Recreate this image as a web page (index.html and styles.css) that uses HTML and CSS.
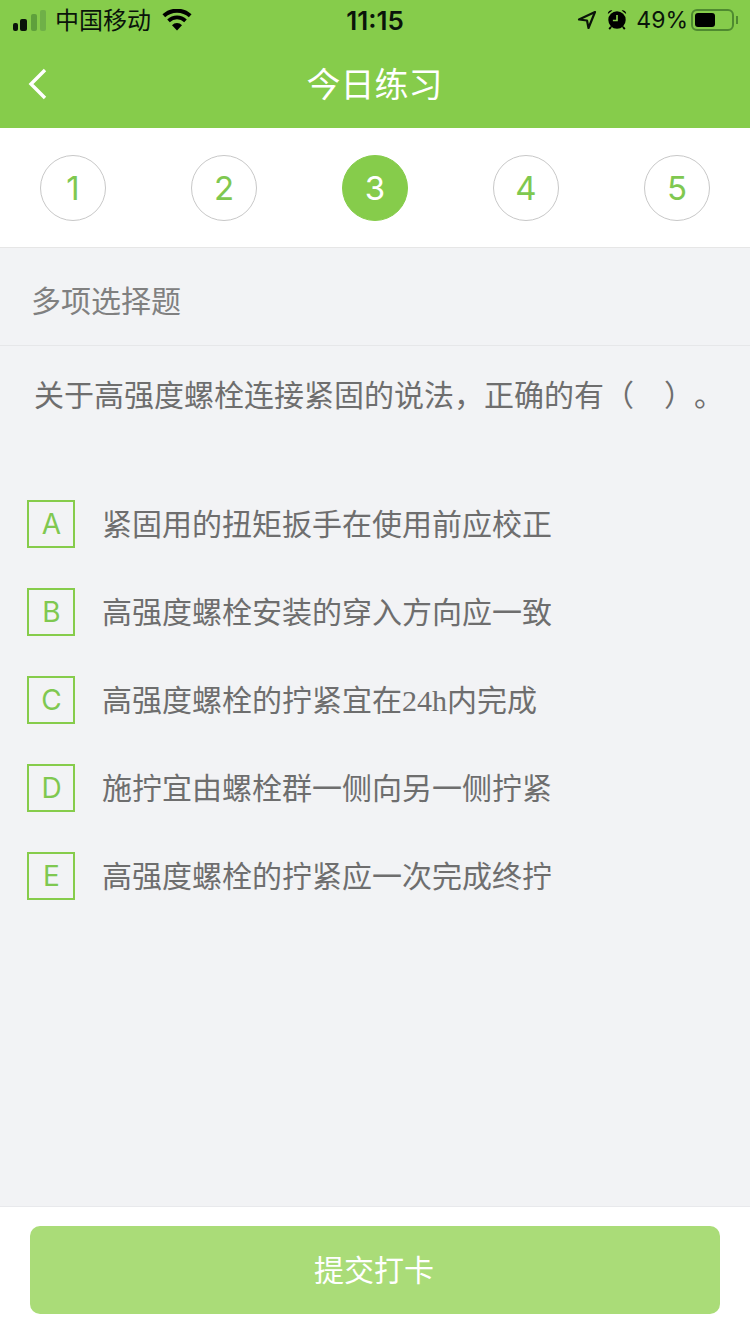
FILE: index.html
```html
<!DOCTYPE html>
<html lang="zh-CN">
<head>
    <meta charset="UTF-8">
    <meta name="viewport" content="width=device-width, initial-scale=1.0">
    <title>今日练习</title>
    <link rel="stylesheet" href="styles.css">
</head>
<body>
    <div class="page">
        <div class="top">
            <div class="status">
                <div class="status-left">
                    <svg class="signal" width="36" height="24" viewBox="0 0 36 24">
                        <rect x="1" y="15" width="5" height="8" rx="2" fill="#0a140a"/>
                        <rect x="8" y="11" width="7" height="12" rx="2" fill="#0a140a"/>
                        <rect x="19" y="6" width="6" height="17" rx="2" fill="#5fa03c"/>
                        <rect x="28" y="2" width="6" height="21" rx="2" fill="#6fb048"/>
                    </svg>
                    <span class="carrier">中国移动</span>
                    <svg class="wifi" width="30" height="22" viewBox="0 0 30 22">
                        <path d="M15 21.500l-5-5.300a7 7 0 0 1 10 0z" fill="#000"/>
                        <path d="M6.500 11.800a12.500 12.500 0 0 1 17 0" fill="none" stroke="#000" stroke-width="3.800"/>
                        <path d="M1.800 6.800a19.500 19.500 0 0 1 26.400 0" fill="none" stroke="#000" stroke-width="4"/>
                    </svg>
                </div>
                <span class="time">11:15</span>
                <div class="status-right">
                    <svg width="20" height="20" viewBox="0 0 20 20">
                        <path d="M18 2L2 9.500l8 1 1.500 7.500z" fill="none" stroke="#0a140a" stroke-width="2.200" stroke-linejoin="round"/>
                    </svg>
                    <svg class="alarm" width="22" height="24" viewBox="0 0 24 26">
                        <path d="M2 6.500a4 4 0 0 1 5-4zM22 6.500a4 4 0 0 0-5-4z" fill="#000"/>
                        <path d="M5.500 20.500l-2 2.500M18.500 20.500l2 2.500" stroke="#000" stroke-width="2"/>
                        <circle cx="12" cy="13" r="9.500" fill="#000"/>
                        <path d="M12 7.500V13.500H7.500" fill="none" stroke="#86cd4b" stroke-width="1.800"/>
                    </svg>
                    <span class="percent">49%</span>
                    <div class="battery"><div class="battery-level"></div></div>
                    <div class="battery-cap"></div>
                </div>
            </div>
            <div class="nav">
                <svg class="back" width="20" height="32" viewBox="0 0 20 32">
                    <path d="M17 2L3 16l14 14" fill="none" stroke="#fff" stroke-width="3.400"/>
                </svg>
                <h1>今日练习</h1>
            </div>
        </div>

        <div class="steps">
            <div class="step">1</div>
            <div class="step">2</div>
            <div class="step active">3</div>
            <div class="step">4</div>
            <div class="step">5</div>
        </div>

        <div class="main">
            <div class="type">多项选择题</div>
            <p class="question">关于高强度螺栓连接紧固的说法，正确的有（<span class="blank"></span>）。</p>
            <div class="options">
                <div class="option"><span class="letter">A</span><span class="option-text">紧固用的扭矩扳手在使用前应校正</span></div>
                <div class="option"><span class="letter">B</span><span class="option-text">高强度螺栓安装的穿入方向应一致</span></div>
                <div class="option"><span class="letter">C</span><span class="option-text">高强度螺栓的拧紧宜在<span class="num">24h</span>内完成</span></div>
                <div class="option"><span class="letter">D</span><span class="option-text">施拧宜由螺栓群一侧向另一侧拧紧</span></div>
                <div class="option"><span class="letter">E</span><span class="option-text">高强度螺栓的拧紧应一次完成终拧</span></div>
            </div>
        </div>

        <div class="footer">
            <button>提交打卡</button>
        </div>
    </div>
</body>
</html>
```

FILE: styles.css
```css
* {
    box-sizing: border-box;
}
body {
    margin: 0;
    font-family: "Liberation Sans", "Noto Sans CJK SC", sans-serif;
    background-color: #f2f3f5;
}
.page {
    display: flex;
    flex-direction: column;
    width: 750px;
    height: 1334px;
    overflow: hidden;
}
.top {
    height: 128px;
    background-color: #86cc4b;
}
.status {
    display: flex;
    justify-content: space-between;
    align-items: center;
    height: 40px;
    padding: 0 12px;
    color: #0a140a;
}
.status-left,
.status-right {
    display: flex;
    align-items: center;
    width: 270px;
}
.status-right {
    justify-content: flex-end;
}
.carrier {
    margin-left: 7px;
    padding-bottom: 3px;
    font-size: 24px;
}
.wifi {
    margin-left: 11px;
}
.time {
    font-family: Inter, sans-serif;
    font-size: 26px;
    font-weight: 600;
}
.alarm {
    margin-left: 9px;
}
.percent {
    margin-left: 8px;
    font-family: Inter, sans-serif;
    font-size: 23px;
}
.battery {
    width: 43px;
    height: 22px;
    margin-left: 3px;
    padding: 2px;
    border: 2px solid #4f8a30;
    border-radius: 6px;
}
.battery-level {
    width: 20px;
    height: 100%;
    background-color: #000;
    border-radius: 3px;
}
.battery-cap {
    width: 2px;
    height: 8px;
    margin-left: 2px;
    background-color: #4f8a30;
}
.nav {
    display: flex;
    justify-content: center;
    align-items: center;
    position: relative;
    height: 88px;
}
.nav h1 {
    margin: 0 0 4px -1px;
    font-size: 34px;
    font-weight: 400;
    color: #fff;
}
.back {
    position: absolute;
    left: 28px;
    top: 28px;
}
.steps {
    display: flex;
    justify-content: space-between;
    align-items: center;
    height: 120px;
    padding: 0 40px;
    background-color: #fff;
    border-bottom: 1px solid #e6e6e6;
}
.step {
    display: flex;
    justify-content: center;
    align-items: center;
    width: 66px;
    height: 66px;
    font-family: Inter, "Liberation Sans", sans-serif;
    font-size: 33px;
    font-weight: 400;
    color: #7fc850;
    border: 1px solid #c8c8c8;
    border-radius: 50%;
}
.step.active {
    color: #fff;
    background-color: #86cc4b;
    border-color: #86cc4b;
}
.main {
    flex: 1;
}
.type {
    display: flex;
    align-items: center;
    height: 98px;
    padding: 4px 0 0 31px;
    font-size: 30px;
    color: #808080;
    border-bottom: 1px solid #e6e7e9;
}
.question {
    margin: 0;
    padding: 32px 0 0 34px;
    font-size: 30px;
    line-height: 36px;
    color: #6e6e6e;
    text-spacing-trim: space-all;
}
.blank {
    display: inline-block;
    width: 30px;
}
.options {
    display: flex;
    flex-direction: column;
    gap: 40px;
    padding: 86px 0 0 27px;
}
.option {
    display: flex;
    align-items: center;
    gap: 28px;
    height: 48px;
    font-size: 30px;
    color: #6e6e6e;
}
.option-text {
    margin-left: -1px;
    padding-bottom: 5px;
}
.letter {
    display: flex;
    justify-content: center;
    align-items: center;
    width: 48px;
    height: 48px;
    padding-left: 1px;
    font-family: Inter, "Liberation Sans", sans-serif;
    font-size: 28px;
    font-weight: 400;
    color: #7fc850;
    border: 2px solid #86cc4b;
}
.num {
    font-family: "Liberation Serif", serif;
}
.footer {
    height: 128px;
    padding: 19px 30px 0;
    background-color: #fff;
    border-top: 1px solid #e8e9ec;
}
.footer button {
    display: block;
    width: 100%;
    height: 88px;
    padding: 0 2px 4px 0;
    font-family: inherit;
    font-size: 30px;
    color: #fff;
    background-color: #aadc78;
    border: none;
    border-radius: 10px;
}
```
